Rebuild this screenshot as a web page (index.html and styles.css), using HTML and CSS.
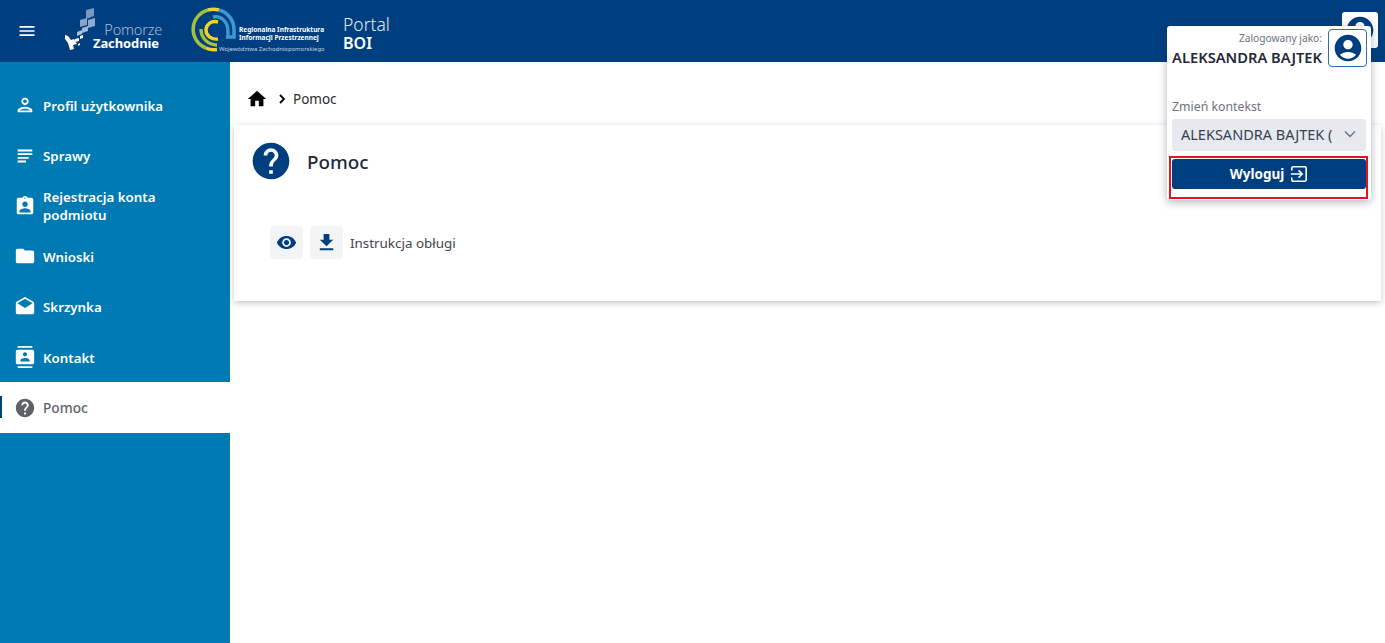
FILE: index.html
```html
<!DOCTYPE html>
<html lang="pl">
<head>
<meta charset="utf-8">
<title>Portal BOI - Pomoc</title>
<link rel="stylesheet" href="styles.css">
</head>
<body>
<header class="topbar">
  <button class="menu-btn" aria-label="Menu">
    <svg width="20" height="20" viewBox="0 0 24 24"><path fill="#fff" d="M3 18h18v-2H3v2zm0-5h18v-2H3v2zm0-7v2h18V6H3z"/></svg>
  </button>
  <div class="logo-pz">
    <svg class="logo-pz-mark" width="32" height="43" viewBox="0 0 32 43">
      <g fill="#a9bfdb">
        <path d="M21 2l8-2 0 8-8 3z" opacity=".7"/>
        <path d="M23 12l7-2 0 8-7 2z" opacity=".85"/>
        <path d="M15 12l7-2 0 7-7 2z" opacity=".8"/>
        <path d="M17 20l6-2 0 5-6 2z" opacity=".95"/>
        <path d="M12 24l5-2 0 4-5 2z"/>
      </g>
      <g fill="#fff">
        <path d="M15 28l3-1 0 3-3 1zM10 31l4-1 0 3-4 1z"/>
        <path d="M0 27l3 1 3 4 3-1 3 5-4 1 1 4-4 1-2-7-3-4z"/>
        <path d="M13 36l2-1 0 2-2 1z"/>
      </g>
    </svg>
    <div class="logo-pz-text">
      <span class="logo-pz-top">Pomorze</span>
      <span class="logo-pz-bot">Zachodnie</span>
    </div>
  </div>
  <div class="logo-ri">
    <svg width="46" height="48" viewBox="0 0 46 48" fill="none">
      <path d="M17 4A20 20 0 0 0 15 42" stroke="#a5c13c" stroke-width="3.500"/>
      <path d="M15 42A20 20 0 0 0 26 43.500" stroke="#f3d02a" stroke-width="3.500"/>
      <path d="M17 4A20 20 0 0 1 28 4" stroke="#f3d02a" stroke-width="3.500"/>
      <path d="M28 4A20 20 0 0 1 43 24V31H35" stroke="#3b9ad6" stroke-width="3.500"/>
      <path d="M22 11C30 9 37 16 37 25V31" stroke="#3b9ad6" stroke-width="3.400"/>
      <path d="M10 23C10 32 17 39 26 39" stroke="#a5c13c" stroke-width="3.400"/>
      <path d="M27 16C20 14 15 19 15 24C15 30 21 34 27 33" stroke="#f3d02a" stroke-width="3.400"/>
    </svg>
    <div class="logo-ri-text">
      <span class="logo-ri-l">Regionalna Infrastruktura</span>
      <span class="logo-ri-l">Informacji Przestrzennej</span>
      <span class="logo-ri-w">Województwa Zachodniopomorskiego</span>
    </div>
  </div>
  <div class="portal">
    <span class="portal-top">Portal</span>
    <span class="portal-bot">BOI</span>
  </div>
  <div class="user-under">
    <span class="user-under-name">ALEKSANDRA BAJTEK</span>
    <span class="avatar-btn">
      <svg width="32" height="32" viewBox="0 0 24 24"><path fill="#003f7f" d="M12 2C6.480 2 2 6.480 2 12s4.480 10 10 10 10-4.480 10-10S17.520 2 12 2zm0 4c1.930 0 3.500 1.570 3.500 3.500S13.930 13 12 13s-3.500-1.570-3.500-3.500S10.070 6 12 6zm0 14c-2.030 0-4.430-.82-6.140-2.880C7.550 15.800 9.680 15 12 15s4.450.8 6.140 2.120C16.430 19.180 14.030 20 12 20z"/></svg>
    </span>
  </div>
</header>

<div class="shell">
  <nav class="sidebar">
    <a class="nav-item">
      <svg class="nav-icon" viewBox="0 0 24 24"><path d="M12 6c1.100 0 2 .9 2 2s-.9 2-2 2-2-.9-2-2 .9-2 2-2m0 10c2.700 0 5.800 1.290 6 2H6c.23-.72 3.310-2 6-2m0-12C9.790 4 8 5.790 8 8s1.790 4 4 4 4-1.790 4-4-1.790-4-4-4zm0 10c-2.670 0-8 1.340-8 4v2h16v-2c0-2.660-5.330-4-8-4z"/></svg>
      <span>Profil użytkownika</span>
    </a>
    <a class="nav-item">
      <svg class="nav-icon" viewBox="0 0 24 24"><path d="M4 15h12v-2H4v2zm0 4h9v-2H4v2zm0-8h16V9H4v2zm0-6v2h16V5H4z"/></svg>
      <span>Sprawy</span>
    </a>
    <a class="nav-item">
      <svg class="nav-icon" viewBox="0 0 24 24"><path d="M19 3h-4.180C14.400 1.840 13.300 1 12 1s-2.400.84-2.820 2H5c-1.100 0-2 .9-2 2v14c0 1.100.9 2 2 2h14c1.100 0 2-.9 2-2V5c0-1.100-.9-2-2-2zm-7-.25c.22 0 .41.1.55.25.12.13.2.31.2.5 0 .41-.34.75-.75.75s-.75-.34-.75-.75c0-.19.08-.37.2-.5.14-.15.33-.25.55-.25zM12 7c1.660 0 3 1.340 3 3s-1.340 3-3 3-3-1.340-3-3 1.340-3 3-3zm6 12H6v-1.400c0-2 4-3.100 6-3.100s6 1.100 6 3.100V19z"/></svg>
      <span>Rejestracja konta<br>podmiotu</span>
    </a>
    <a class="nav-item">
      <svg class="nav-icon" viewBox="0 0 24 24"><path d="M10 4H4c-1.100 0-1.990.9-1.990 2L2 18c0 1.100.9 2 2 2h16c1.100 0 2-.9 2-2V8c0-1.100-.9-2-2-2h-8l-2-2z"/></svg>
      <span>Wnioski</span>
    </a>
    <a class="nav-item">
      <svg class="nav-icon" viewBox="0 0 24 24"><path d="M21.990 8c0-.72-.37-1.350-.94-1.700L12 1 2.950 6.300C2.380 6.650 2 7.280 2 8v10c0 1.100.9 2 2 2h16c1.100 0 2-.9 2-2l-.01-10zM12 13L3.740 7.840 12 3l8.260 4.840L12 13z"/></svg>
      <span>Skrzynka</span>
    </a>
    <a class="nav-item">
      <svg class="nav-icon" viewBox="0 0 24 24"><path d="M20 0H4v2h16V0zM4 24h16v-2H4v2zM20 4H4c-1.100 0-2 .9-2 2v12c0 1.100.9 2 2 2h16c1.100 0 2-.9 2-2V6c0-1.100-.9-2-2-2zm-8 2.750c1.240 0 2.250 1.010 2.250 2.250s-1.010 2.250-2.250 2.250S9.750 10.240 9.750 9 10.760 6.750 12 6.750zM17 17H7v-1.500c0-1.670 3.330-2.500 5-2.500s5 .83 5 2.500V17z"/></svg>
      <span>Kontakt</span>
    </a>
    <a class="nav-item nav-item-active">
      <svg class="nav-icon" viewBox="0 0 24 24"><path d="M12 2C6.480 2 2 6.480 2 12s4.480 10 10 10 10-4.480 10-10S17.520 2 12 2zm1 17h-2v-2h2v2zm2.070-7.750l-.9.920C13.450 12.900 13 13.500 13 15h-2v-.5c0-1.100.45-2.100 1.170-2.830l1.240-1.260c.37-.36.590-.86.590-1.410 0-1.100-.9-2-2-2s-2 .9-2 2H8c0-2.210 1.790-4 4-4s4 1.790 4 4c0 .88-.36 1.680-.93 2.250z"/></svg>
      <span>Pomoc</span>
    </a>
  </nav>

  <main class="content">
    <div class="breadcrumb">
      <svg width="22" height="22" viewBox="0 0 24 24"><path fill="#000" d="M10 20v-6h4v6h5v-8h3L12 3 2 12h3v8z"/></svg>
      <svg class="crumb-sep" width="16" height="16" viewBox="0 0 16 16" fill="none"><path d="M6 4l4 4-4 4" stroke="#000" stroke-width="1.800"/></svg>
      <span>Pomoc</span>
    </div>
    <section class="card">
      <div class="card-head">
        <svg width="44" height="44" viewBox="0 0 24 24"><path fill="#003f7f" d="M12 2C6.480 2 2 6.480 2 12s4.480 10 10 10 10-4.480 10-10S17.520 2 12 2zm1 17h-2v-2h2v2zm2.070-7.750l-.9.920C13.450 12.900 13 13.500 13 15h-2v-.5c0-1.100.45-2.100 1.170-2.830l1.240-1.260c.37-.36.590-.86.590-1.410 0-1.100-.9-2-2-2s-2 .9-2 2H8c0-2.210 1.790-4 4-4s4 1.790 4 4c0 .88-.36 1.680-.93 2.250z"/></svg>
        <h1>Pomoc</h1>
      </div>
      <div class="doc-row">
        <button class="icon-btn" aria-label="Podgląd">
          <svg width="21" height="21" viewBox="0 0 24 24"><path fill="#003f7f" d="M12 4.500C7 4.500 2.730 7.610 1 12c1.730 4.390 6 7.500 11 7.500s9.270-3.110 11-7.500c-1.730-4.390-6-7.500-11-7.500zM12 17c-2.760 0-5-2.240-5-5s2.240-5 5-5 5 2.240 5 5-2.240 5-5 5zm0-8c-1.660 0-3 1.340-3 3s1.340 3 3 3 3-1.340 3-3-1.340-3-3-3z"/></svg>
        </button>
        <button class="icon-btn" aria-label="Pobierz">
          <svg width="23" height="23" viewBox="0 0 24 24"><path fill="#003f7f" d="M19 9h-4V3H9v6H5l7 7 7-7zM5 18v2h14v-2H5z"/></svg>
        </button>
        <span class="doc-name">Instrukcja obługi</span>
      </div>
    </section>
  </main>
</div>

<aside class="popover">
  <div class="pop-user">
    <div class="pop-user-text">
      <span class="pop-label">Zalogowany jako:</span>
      <span class="pop-name">ALEKSANDRA BAJTEK</span>
    </div>
    <span class="pop-avatar">
      <svg width="32" height="32" viewBox="0 0 24 24"><path fill="#003f7f" d="M12 2C6.480 2 2 6.480 2 12s4.480 10 10 10 10-4.480 10-10S17.520 2 12 2zm0 4c1.930 0 3.500 1.570 3.500 3.500S13.930 13 12 13s-3.500-1.570-3.500-3.500S10.070 6 12 6zm0 14c-2.030 0-4.430-.82-6.140-2.880C7.550 15.800 9.680 15 12 15s4.450.8 6.140 2.120C16.430 19.180 14.030 20 12 20z"/></svg>
    </span>
  </div>
  <div class="pop-context-label">Zmień kontekst</div>
  <div class="pop-select">
    <span class="pop-select-text">ALEKSANDRA BAJTEK (</span>
    <svg width="14" height="14" viewBox="0 0 14 14" fill="none"><path d="M2 4.500l5 5 5-5" stroke="#6b7280" stroke-width="1.400"/></svg>
  </div>
  <div class="pop-logout-frame">
    <button class="pop-logout">
      <span>Wyloguj</span>
      <svg width="18" height="18" viewBox="0 0 20 20" fill="none" stroke="#fff" stroke-width="1.800"><path d="M2 6V3.500A1.500 1.500 0 0 1 3.500 2h13A1.500 1.500 0 0 1 18 3.500v13a1.500 1.500 0 0 1-1.500 1.500h-13A1.500 1.500 0 0 1 2 16.500V14"/><path d="M1 10h12M9.500 6l4 4-4 4"/></svg>
    </button>
  </div>
</aside>
</body>
</html>
```
FILE: styles.css
```css
* { box-sizing: border-box; }
html, body { margin: 0; height: 100%; }
body {
  font-family: "Noto Sans", "Open Sans", sans-serif;
  background: #fff;
  color: #1f2937;
  overflow: hidden;
  position: relative;
}
button { font-family: inherit; border: 0; padding: 0; cursor: pointer; }

.topbar {
  height: 62px;
  background: #003f7f;
  display: flex;
  align-items: center;
  position: relative;
}
.menu-btn {
  width: 20px;
  height: 20px;
  margin-left: 17px;
  background: none;
  display: flex;
}
.logo-pz {
  margin-left: 28px;
  align-self: flex-start;
  display: flex;
  align-items: flex-start;
  width: 97px;
  margin-top: 8px;
}
.logo-pz-mark { flex: none; }
.logo-pz-text {
  margin-left: 8px;
  margin-top: 15px;
  width: 57px;
  flex: none;
  display: flex;
  flex-direction: column;
  align-items: flex-end;
  line-height: 13px;
  white-space: nowrap;
}
.logo-pz-top { font-size: 14.500px; color: #a9bcd6; font-weight: 300; letter-spacing: -.2px; }
.logo-pz-bot { font-size: 13px; color: #fff; font-weight: 700; letter-spacing: -.1px; margin: 1px 3px 0 0; }
.logo-ri {
  margin-left: 29px;
  align-self: flex-start;
  display: flex;
  align-items: flex-start;
  width: 133px;
  margin-top: 6px;
}
.logo-ri svg { flex: none; }
.logo-ri-text {
  margin-left: 2px;
  margin-top: 20px;
  display: flex;
  flex-direction: column;
  white-space: nowrap;
  color: #fff;
}
.logo-ri-l { font-size: 6.500px; line-height: 7.500px; font-weight: 700; }
.logo-ri-w {
  font-size: 5.900px;
  line-height: 8px;
  margin-top: 3.500px;
  margin-left: -20px;
  color: #c6d4e6;
}
.portal {
  margin-left: 19px;
  display: flex;
  flex-direction: column;
  color: #fff;
  line-height: 19px;
  font-size: 17.500px;
  margin-top: 6px;
}
.portal-top { font-weight: 300; color: #e3e9f2; }
.portal-bot { font-weight: 600; font-size: 16px; }
.user-under {
  position: absolute;
  right: 7px;
  top: 12px;
  display: flex;
  align-items: center;
  gap: 5px;
}
.user-under-name { color: #fff; font-size: 12.600px; font-weight: 700; }
.avatar-btn {
  width: 36px;
  height: 36px;
  background: #fff;
  border-radius: 3px;
  display: flex;
  align-items: center;
  justify-content: center;
}

.shell { display: flex; height: 581px; }
.sidebar {
  width: 230px;
  flex: none;
  background: #007ab3;
  padding-top: 18px;
  display: flex;
  flex-direction: column;
}
.nav-item {
  height: 50.400px;
  padding-left: 14px;
  display: flex;
  align-items: center;
  gap: 7px;
  color: #fff;
  font-size: 13.300px;
  font-weight: 600;
  line-height: 18px;
  position: relative;
}
.nav-item span { margin-top: 1px; }
.nav-icon { width: 22px; height: 22px; fill: #fff; flex: none; }
.nav-item-active {
  background: #fff;
  color: #5f6368;
  font-size: 13.700px;
  font-weight: 500;
}
.nav-item-active .nav-icon { fill: #5f6368; }
.nav-item-active::before {
  content: "";
  position: absolute;
  left: 0;
  top: 14px;
  width: 2px;
  height: 22px;
  background: #003f7f;
}

.content { flex: 1; padding: 0 4px; min-width: 0; }
.breadcrumb {
  height: 63px;
  padding-left: 12px;
  padding-top: 11px;
  display: flex;
  align-items: center;
  font-size: 13.500px;
  color: #2b2b2b;
}
.crumb-sep { margin: 0 3px 0 6px; }
.card {
  height: 176px;
  background: #fff;
  box-shadow: 0 2px 6px rgba(60, 70, 100, .3);
  padding: 14px 0 0 15px;
}
.card-head { display: flex; align-items: center; height: 44px; }
.card h1 {
  margin: 1px 0 0 14px;
  font-size: 18.800px;
  font-weight: 500;
  color: #1f2937;
}
.doc-row {
  margin: 43px 0 0 21px;
  display: flex;
  align-items: center;
  gap: 7px;
}
.icon-btn {
  width: 33px;
  height: 33px;
  background: #f3f4f6;
  border-radius: 4px;
  display: flex;
  align-items: center;
  justify-content: center;
}
.doc-name { font-size: 13.400px; color: #3f4651; }

.popover {
  position: absolute;
  left: 1167px;
  top: 26px;
  width: 204px;
  height: 174px;
  background: #fff;
  border-radius: 3px;
  box-shadow: 0 2px 8px rgba(30, 40, 70, .35);
  padding: 0 5px;
}
.pop-user { display: flex; justify-content: flex-end; height: 44px; position: relative; }
.pop-user-text {
  position: absolute;
  right: 44px;
  top: 5px;
  display: flex;
  flex-direction: column;
  align-items: flex-end;
}
.pop-label { font-size: 10.200px; line-height: 14px; color: #6b7280; }
.pop-name { font-size: 14.700px; line-height: 24px; font-weight: 600; color: #1f2937; white-space: nowrap; }
.pop-avatar {
  position: absolute;
  right: -1px;
  top: 3px;
  width: 39px;
  height: 38px;
  border: 1px solid #2f6ca8;
  border-radius: 4px;
  background: #fff;
  display: flex;
  align-items: center;
  justify-content: center;
}
.pop-context-label { margin-top: 28px; font-size: 12.300px; line-height: 18px; color: #6b7280; }
.pop-select {
  margin-top: 3px;
  height: 32px;
  background: #e6e9ee;
  border-radius: 3px;
  padding: 0 9px 2px;
  display: flex;
  align-items: center;
  justify-content: space-between;
  font-size: 14.500px;
  color: #374151;
  white-space: nowrap;
}
.pop-select-text { width: 152px; overflow: hidden; flex: none; }
.pop-logout-frame {
  margin: 5px -2px 0 -3px;
  height: 43px;
  border: 2px solid #e8111c;
  padding: 1px 0 1px 1px;
}
.pop-logout {
  width: 100%;
  height: 30px;
  background: #003f7f;
  color: #fff;
  border-radius: 3px;
  font-size: 13.500px;
  font-weight: 700;
  display: flex;
  align-items: center;
  justify-content: center;
  gap: 6px;
}
```
